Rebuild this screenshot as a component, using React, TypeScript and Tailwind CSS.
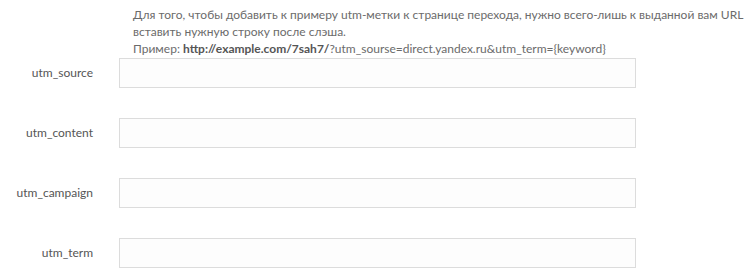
const fields = ['utm_source', 'utm_content', 'utm_campaign', 'utm_term']

export default function App() {
  return (
    <div className="w-[750px] h-[274px] bg-white font-['Lato',sans-serif] text-[12px] text-[#6b6b6b] overflow-hidden">
      <div className="pl-[133px] pt-[6px] leading-[17px] w-[760px]">
        <p>
          Для того, чтобы добавить к примеру utm-метки к странице перехода, нужно всего-лишь к выданной вам URL
          вставить нужную строку после слэша.
        </p>
        <p>
          Пример: <b className="text-[#555]">http://example.com/7sah7/</b>?utm_sourse=direct.yandex.ru&amp;utm_term={'{keyword}'}
        </p>
      </div>

      <div className="flex flex-col gap-[30px] mt-px">
        {fields.map((name) => (
          <div key={name} className="flex items-center">
            <label className="w-[93px] text-right text-[12px] text-[#555]">{name}</label>
            <input
              type="text"
              className="ml-[26px] w-[517px] h-[30px] border border-[#dcdcdc] bg-[#fdfdfd] outline-none"
            />
          </div>
        ))}
      </div>
    </div>
  )
}
